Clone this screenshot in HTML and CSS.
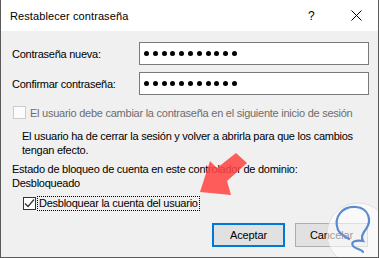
FILE: index.html
```html
<!DOCTYPE html>
<html lang="es">
<head>
<meta charset="utf-8">
<link rel="stylesheet" href="styles.css">
</head>
<body>
<div class="dialog">
  <div class="titlebar">
    <span class="title">Restablecer contraseña</span>
    <span class="help">?</span>
    <svg class="close" width="11" height="11" viewBox="0 0 11 11"><path d="M0.5 0.5 L10.5 10.5 M10.5 0.5 L0.5 10.5" stroke="#000" stroke-width="1" fill="none"/></svg>
  </div>
  <div class="content">
    <div class="field">
      <span class="label">Contraseña nueva:</span>
      <div class="input"><i></i><i></i><i></i><i></i><i></i><i></i><i></i><i></i><i></i><i></i><i></i></div>
    </div>
    <div class="field field-second">
      <span class="label">Confirmar contraseña:</span>
      <div class="input"><i></i><i></i><i></i><i></i><i></i><i></i><i></i><i></i><i></i><i></i><i></i></div>
    </div>
    <div class="check disabled">
      <span class="box"></span>
      <span class="check-text">El usuario debe cambiar la contraseña en el siguiente inicio de sesión</span>
    </div>
    <p class="note">El usuario ha de cerrar la sesión y volver a abrirla para que los cambios<br>tengan efecto.</p>
    <p class="status">Estado de bloqueo de cuenta en este controlador de dominio:<br>Desbloqueado</p>
    <div class="check checked">
      <span class="box"><svg width="11" height="11" viewBox="0 0 11 11"><path d="M1 5.5 L4 8.5 L10 1.5" stroke="#333" stroke-width="1.2" fill="none"/></svg></span>
      <span class="check-text focus">Desbloquear la cuenta del usuario</span>
    </div>
    <div class="buttons">
      <div class="btn primary">Aceptar</div>
      <div class="btn">Cancelar</div>
    </div>
  </div>
  <svg class="arrow" width="60" height="60" viewBox="190 140 60 60">
    <polygon points="200,192 210,161 217,168 236,153 247,163 227,181 231,195" fill="rgba(255,70,70,0.88)"/>
  </svg>
  <svg class="logo" width="70" height="70" viewBox="323 199 70 70">
    <circle cx="358" cy="234" r="31" fill="rgba(255,255,255,0.6)" stroke="rgba(210,210,210,0.6)" stroke-width="1"/>
    <path d="M338 230 C333 216 343 206 356 207 C369 208 372 221 366 229 C362 234 361 238 363 241 C357 240 350 241 353 246 C355 249 362 249 363 252 M338 230 C341 235 346 237 349 239" stroke="#5b8ad0" stroke-width="2.2" fill="none" stroke-linecap="round"/>
  </svg>
</div>
</body>
</html>
```
FILE: styles.css
```css
* { box-sizing: border-box; }
html, body { margin: 0; padding: 0; background: #ffffff; }
body { width: 380px; height: 258px; overflow: hidden; font-family: "Liberation Sans", Arial, sans-serif; font-size: 11px; color: #000; }

.dialog {
  position: relative;
  width: 379px;
  height: 258px;
  border-left: 1px solid #5a5a5a;
  border-right: 1px solid #5a5a5a;
  border-bottom: 1px solid #5a5a5a;
  background: #f0f0f0;
  display: flex;
  flex-direction: column;
  overflow: hidden;
}

.titlebar {
  height: 31px;
  background: #ffffff;
  display: flex;
  align-items: center;
  padding-left: 9px;
  flex: none;
}
.title { font-size: 11px; letter-spacing: 0.1px; flex: 1; padding-top: 1px; }
.help { font-size: 12px; width: 12px; margin-right: 31px; padding-top: 1px; }
.close { margin-right: 16px; }

.content {
  padding: 11px 9px 0 11px;
  letter-spacing: -0.25px;
}

.field { display: flex; align-items: center; height: 23px; }
.field-second { margin-top: 7px; }
.label { width: 127px; padding-top: 1px; }
.input {
  width: 230px;
  height: 23px;
  background: #fff;
  border: 1px solid #7a7a7a;
  display: flex;
  align-items: center;
  gap: 3.8px;
  padding-left: 4px;
}
.input i {
  display: block;
  width: 5px;
  height: 5px;
  border-radius: 50%;
  background: #000;
  margin-top: -1px;
}

.check { display: flex; align-items: center; height: 15px; }
.check .box {
  width: 13px;
  height: 13px;
  border: 1px solid #333;
  background: #fff;
  display: flex;
  align-items: center;
  justify-content: center;
  flex: none;
}
.check.disabled { margin-top: 10px; padding-left: 1px; }
.check.disabled .box { border-color: #cccccc; background: #fcfcfc; }
.check.disabled .check-text { color: #6d6d6d; margin-left: 4px; }

.note { margin: 9px 0 0 10px; line-height: 14px; }
.status { margin: 5px 0 0 0; line-height: 14px; }

.check.checked { margin-top: 6px; padding-left: 11px; }
.check.checked .check-text { margin-left: 2px; }
.focus { outline: 1px dotted #000; outline-offset: 0; padding: 0 1px; line-height: 13px; }

.buttons { display: flex; justify-content: flex-end; gap: 10px; margin-top: 12px; padding-right: 1px; }
.btn {
  width: 73px;
  height: 24px;
  background: #e1e1e1;
  border: 1px solid #adadad;
  display: flex;
  align-items: center;
  justify-content: center;
  letter-spacing: -0.1px;
}
.btn.primary { border: 2px solid #0078d7; }

.arrow { position: absolute; left: 189px; top: 140px; }
.logo { position: absolute; left: 322px; top: 199px; }
```
